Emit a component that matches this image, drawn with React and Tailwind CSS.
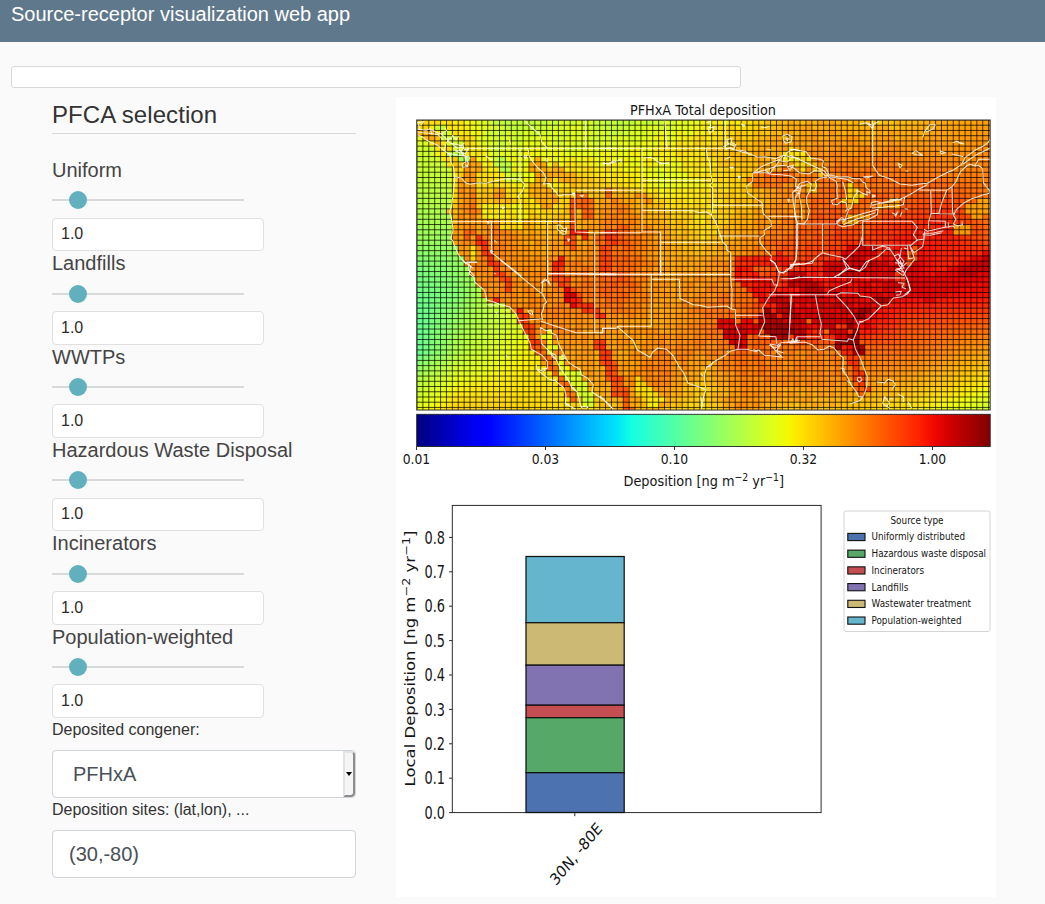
import React from "react";

const MAP = { x: 417, y: 120, w: 573, h: 290 };
const CELL_W = 5.893;
const CELL_H = 5.226;

// Colour scale: piecewise-linear channels over 0..1
const CHANNELS = {
  r: [[0, 0], [0.35, 0], [0.66, 1], [0.89, 1], [1, 0.5]],
  g: [[0, 0], [0.125, 0], [0.375, 1], [0.64, 1], [0.91, 0], [1, 0]],
  b: [[0, 0.5], [0.11, 1], [0.34, 1], [0.65, 0], [1, 0]],
};

function lerpTable(table, v) {
  if (v <= table[0][0]) return table[0][1];
  for (let i = 1; i < table.length; i++) {
    if (v <= table[i][0]) {
      const [a, av] = table[i - 1];
      const [b, bv] = table[i];
      return av + ((bv - av) * (v - a)) / (b - a);
    }
  }
  return table[table.length - 1][1];
}

function jet(t) {
  const c = (k) => Math.round(255 * lerpTable(CHANNELS[k], t));
  return `rgb(${c("r")},${c("g")},${c("b")})`;
}

// Deposition field (percent of the colour scale) every 41 x 29 px
const LAND = [
  [70, 66, 59, 58, 62, 57, 61, 64, 67, 71, 73, 70, 71, 73, 74, 75],
  [60, 70, 61, 65, 62, 64, 66, 68, 72, 74, 75, 76, 75, 75, 76, 76],
  [66, 68, 67, 64, 70, 66, 63, 66, 70, 76, 79, 79, 79, 78, 78, 76],
  [70, 70, 73, 66, 72, 77, 69, 67, 71, 76, 81, 80, 82, 85, 77, 75],
  [74, 74, 78, 73, 73, 80, 74, 68, 75, 79, 83, 84, 88, 88, 80, 81],
  [76, 76, 77, 76, 77, 81, 74, 74, 78, 85, 87, 90, 92, 87, 91, 92],
  [76, 76, 76, 76, 78, 81, 74, 76, 79, 89, 91, 91, 91, 90, 90, 89],
  [76, 76, 76, 77, 76, 75, 74, 78, 81, 90, 94, 91, 83, 82, 81, 78],
  [76, 76, 76, 76, 74, 74, 77, 76, 80, 77, 77, 79, 79, 76, 73, 68],
  [70, 70, 70, 72, 74, 75, 78, 70, 78, 76, 77, 75, 73, 70, 66, 60],
  [67, 67, 67, 67, 67, 72, 71, 67, 76, 70, 71, 69, 66, 63, 60, 57],
];
const SEA = [
  [68, 62, 58, 60, 62],
  [60, 62, 62, 62, 62],
  [58, 60, 60, 62, 62],
  [56, 58, 60, 62, 62],
  [54, 55, 60, 62, 62],
  [50, 53, 60, 63, 64],
  [48, 51, 61, 64, 65],
  [47, 54, 60, 64, 66],
  [47, 57, 63, 66, 67],
  [57, 64, 66, 67, 67],
  [63, 69, 69, 68, 67],
];
const COAST = [[120, 415], [160, 440], [166, 450], [178, 454], [212, 449], [240, 453], [262, 464], [280, 476], [301, 488], [305, 506], [318, 516], [345, 531], [365, 545], [385, 562], [410, 574]];

// Local features: x1, y1, x2, y2, radius, value
const FEATURES = [
  [440, 128, 460, 148, 5, 60], [422, 132, 438, 140, 4, 73], [452, 152, 466, 160, 4, 55],
  [474, 165, 469, 178, 7, 75], [466, 185, 468, 222, 9, 76], [472, 200, 474, 212, 5, 78],
  [501, 163, 503, 167, 6, 57], [508, 178, 520, 179, 5, 61], [500, 192, 502, 194, 6, 75],
  [487, 212, 520, 214, 8, 65], [505, 224, 520, 224, 5, 67], [538, 165, 545, 178, 8, 74],
  [536, 190, 548, 200, 9, 74], [555, 170, 572, 180, 6, 73], [473, 252, 474, 258, 4, 66],
  [467, 233, 469, 234, 5, 81], [478, 238, 492, 262, 4, 87], [492, 262, 510, 288, 4, 85],
  [497, 300, 498, 300, 3, 88], [521, 310, 522, 311, 3, 92], [524, 318, 536, 347, 5, 86],
  [540, 350, 556, 374, 4, 81], [562, 378, 571, 398, 4, 80], [548, 335, 551, 350, 5, 62],
  [560, 360, 568, 378, 5, 62], [576, 378, 590, 402, 6, 60], [582, 198, 590, 214, 7, 81],
  [573, 205, 572, 245, 5, 84], [577, 232, 584, 235, 4, 88], [563, 257, 555, 269, 4, 89],
  [556, 270, 576, 300, 6, 85], [566, 293, 576, 304, 4, 92], [576, 302, 603, 316, 4, 87],
  [602, 240, 616, 240, 8, 81], [611, 236, 604, 265, 6, 85], [622, 228, 626, 246, 5, 81],
  [609, 192, 610, 194, 3, 82], [615, 200, 616, 201, 2, 80], [641, 198, 646, 200, 4, 76],
  [616, 282, 634, 284, 4, 81], [600, 345, 606, 358, 6, 87], [608, 362, 620, 392, 7, 84],
  [624, 398, 630, 410, 4, 83], [640, 386, 654, 400, 8, 67], [652, 402, 655, 404, 5, 65],
  [740, 262, 780, 260, 7, 89], [745, 275, 770, 295, 11, 90], [728, 326, 740, 340, 9, 94],
  [745, 325, 752, 330, 7, 93], [768, 320, 782, 332, 10, 98], [780, 300, 800, 330, 8, 94],
  [795, 278, 815, 292, 8, 94], [830, 270, 870, 268, 8, 93], [850, 255, 868, 250, 7, 93],
  [815, 300, 845, 312, 6, 92], [830, 325, 850, 335, 8, 93], [844, 344, 858, 348, 7, 99],
  [850, 325, 853, 336, 5, 98], [858, 315, 868, 312, 3, 97], [882, 302, 888, 300, 3, 96],
  [850, 330, 832, 324, 2, 84], [824, 312, 826, 313, 2, 80], [808, 321, 810, 322, 2, 80],
  [849, 318, 850, 319, 2, 81], [828, 332, 830, 333, 2, 79], [847, 350, 862, 390, 7, 87],
  [858, 386, 863, 395, 4, 80], [846, 360, 848, 372, 3, 77], [757, 181, 785, 177, 8, 80],
  [792, 155, 803, 162, 8, 66], [812, 166, 820, 172, 4, 70], [803, 205, 802, 218, 4, 75],
  [810, 187, 814, 188, 4, 71], [850, 188, 856, 196, 6, 67], [848, 202, 849, 207, 4, 71],
  [845, 222, 865, 217, 4, 73], [880, 205, 900, 203, 3, 72], [975, 210, 990, 205, 8, 73],
  [960, 230, 968, 232, 5, 73], [930, 222, 952, 227, 4, 88], [900, 272, 902, 285, 4, 86],
  [910, 262, 915, 250, 5, 81], [930, 290, 990, 264, 12, 91], [962, 272, 990, 263, 6, 94],
];

function bilinear(grid, x, y) {
  const gx = Math.max(0, (x - MAP.x) / 41);
  const gy = Math.max(0, (y - MAP.y) / 29);
  const i = Math.min(Math.floor(gx), grid[0].length - 2);
  const j = Math.min(Math.floor(gy), grid.length - 2);
  const u = Math.min(1, gx - i);
  const v = Math.min(1, gy - j);
  const top = grid[j][i] * (1 - u) + grid[j][i + 1] * u;
  const bottom = grid[j + 1][i] * (1 - u) + grid[j + 1][i + 1] * u;
  return top * (1 - v) + bottom * v;
}

function segmentDistance(px, py, x1, y1, x2, y2) {
  const dx = x2 - x1;
  const dy = y2 - y1;
  const k = Math.max(0, Math.min(1, ((px - x1) * dx + (py - y1) * dy) / (dx * dx + dy * dy || 1)));
  return Math.hypot(px - x1 - k * dx, py - y1 - k * dy);
}

function buildCells() {
  const cells = [];
  for (let r = 0; r * CELL_H < MAP.h; r++) {
    for (let c = 0; c * CELL_W < MAP.w; c++) {
      const x = MAP.x + c * CELL_W;
      const y = MAP.y + r * CELL_H;
      const cx = x + CELL_W / 2;
      const cy = y + CELL_H / 2;
      const sea = cx < lerpTable(COAST, cy);
      let v = bilinear(sea ? SEA : LAND, cx, cy);
      for (const [x1, y1, x2, y2, rad, val] of FEATURES) {
        if (segmentDistance(cx, cy, x1, y1, x2, y2) < rad) v = v * 0.15 + val * 0.85;
      }
      const land = !sea && cx < 900 - Math.max(0, cy - 290) * 0.5;
      if (land) v += (((r * 37 + c * 59 + r * c * 7) % 13) - 6) * 0.22;
      cells.push({ x, y, fill: jet(v / 100) });
    }
  }
  return cells;
}

const CELLS = buildCells();
const V_LINES = Array.from({ length: 98 }, (_, i) => MAP.x + i * CELL_W);
const H_LINES = Array.from({ length: 56 }, (_, i) => MAP.y + i * CELL_H);

// Coastlines and borders, grouped in six tiles drawn at triple scale
const TILES = [
  { x: 396, y: 96, paths: [
    "M62 75 L72 96 L66 100 L90 103 L102 98 L118 107 L134 113 L150 128 L162 140 L178 152 L190 160 L202 176 L214 184",
    "M66 80 L84 76 L74 88 M64 108 L80 110 L102 112 L126 116 L140 130 M64 116 L80 123 L92 132 L102 138 L122 146 L140 160 L156 172 L188 178 L204 180",
    "M108 116 L104 102 M136 114 L152 104 L147 96 M152 126 L166 128 L170 118 L180 132 L188 120 M160 128 L150 142 L144 164 L148 152 M166 142 L186 146 L195 150 L206 140 M176 154 L204 154 L195 164 L178 164 L192 172 M200 146 L206 162 L217 158 L208 174 L196 168 L212 188 L217 202 L213 212 L200 214 L199 204 L210 197 L207 184 L218 180 L222 190 M206 206 L216 212",
    "M155 172 L162 176 L164 196 L172 212 L176 238 L175 262 L172 290 L167 330 L161 348 L168 376 L171 404 L164 428 L170 434 L178 456 L190 480 L204 498 L218 506 L218 522 L236 540",
    "M214 157 L660 157 M176 242 L196 246 L208 260 L222 265 L248 260 L270 262 L295 255 L330 248 L372 250 L372 157 M372 250 L386 265 L380 284 L365 302 L373 312 L372 376",
    "M396 157 L399 180 L414 202 L426 216 L442 230 L450 246 L442 265 L460 262 L468 276 L480 288 L488 300 L504 296 L526 296 L536 290 L538 408 L596 410 M166 377 L538 376 M540 283 L660 283 M596 410 L596 540 M596 410 L660 410 M455 376 L455 540 M455 533 L660 536 M286 376 L287 470 L376 540",
    "M385 72 L402 90 L416 102 L432 115 L437 138 L455 157 M569 72 L569 157 M217 508 L220 499 L244 499 M218 505 L232 518 M269 180 L287 192 M340 132 L345 146",
    "M384 181 L392 178 L389 188 Z M449 188 L456 188 L454 196 L450 194 Z M317 333 L326 334 L321 338 Z M273 376 L279 377 L276 384 Z M528 290 L536 293 L533 298 L528 294 M552 298 L563 297 L559 303 Z M295 433 L303 440 M283 464 L291 466 L286 472 Z M484 388 L493 387 L502 398 L512 395 L510 413 L500 415 L492 406 L484 400 Z M494 402 L510 408 M515 428 L521 430 L517 436 Z M620 201 L638 204 L660 197",
  ]},
  { x: 600, y: 96, paths: [
    "M0 157 L380 157 M194 72 L201 157 M8 201 L25 204 L40 195 L54 194 L62 189 L64 200 M132 186 L152 184 L166 190 L170 196 L184 202 L207 201 L176 204",
    "M126 157 L126 408 M126 253 L333 253 M0 283 L126 283 M0 410 L126 410 M126 407 L182 408 L182 540 M182 439 L362 439 M0 536 L392 536",
    "M319 157 L322 184 L330 200 L333 236 L338 258 L330 268 L338 276 L338 342 L334 357 L345 376 L352 390 L358 410 L368 438 L380 450 L380 462 L392 470 L392 540",
    "M126 343 L282 344 L296 350 L320 348 L336 358 M336 328 L486 328 L489 352 L512 374 L514 390 L492 404 L494 416 L480 425 L480 440 L498 464 L514 480 L512 492 L526 504 L536 526 L550 532 L560 520 L576 516 L588 492 L592 382",
    "M357 420 L478 420 M505 361 L592 361 M376 72 L376 157 L394 158 L426 168 L450 174 L474 184 L494 182 L526 188 L550 178 L600 190",
    "M458 232 L484 212 L508 202 L544 188 M458 232 L496 222 L530 210 L560 208 M462 230 L500 230 L512 235 L544 236 L572 240 L590 250 M494 222 L510 232 L534 200 L548 180 M552 188 L560 170 L580 160 L600 164 M540 194 L560 198 L572 190 M550 224 L570 222 L582 207 L562 212 L568 220 M458 232 L458 256 L440 270 L442 290 L462 304 L486 320 L488 330",
    "M592 382 L584 360 L584 336 L586 304 L600 284 M590 250 L586 270 L600 278 M578 286 L600 282 M588 290 L600 294",
    "M320 80 L333 74 L331 96 L342 92 L341 102 L330 112 L324 98 L334 88 M424 84 L434 88 L430 92 Z M482 92 L494 95 L508 91 M548 120 L562 115 L576 122 L573 138 L556 142 L550 132 Z M558 126 L566 128 L562 134 Z M370 152 L385 144 L380 132 L396 126 L394 140 L408 146 L400 160 L388 154 L376 162 M380 140 L404 150 M374 190 L390 184 L378 188 M390 214 L400 214 L396 218 Z M414 240 L421 242 L417 248 Z M418 162 L436 166 L448 176 M500 160 L513 162 M563 310 L568 310 L566 319 Z",
  ]},
  { x: 790, y: 96, paths: [
    "M0 160 L20 162 L48 167 L62 186 L90 190 L100 194 L97 212 L108 216 L118 238 L106 240 L92 226 L74 224 L56 234 L28 230 L12 216 L0 212 M0 178 L104 226 L116 242 L170 250 L190 260",
    "M118 236 L146 243 L174 242 L190 248 L210 248 L218 258 L226 262 L228 274 L240 284 L240 292 L230 286 L232 298 L218 292 L200 282 L202 290 L192 302 L188 318 L184 336 L176 340 L164 374 L158 378 M112 244 L90 246 L76 256 L80 270 L74 284 L60 282 L64 264 L52 256 L30 262 L18 280 L8 290 L10 322 L18 364 L22 382 L42 384 L52 370 L58 344 L50 320 L50 302 L60 284 M34 266 L28 300 L34 330 L36 372 M8 290 L26 274 L50 266 M116 244 L138 256 L142 270 L140 284 L144 306 L124 314 L128 324 L142 326 L154 316 L168 320 L172 340 L166 346 M158 258 L166 282 L170 312",
    "M138 384 L150 372 L166 370 L196 360 L222 352 L250 344 L264 340 L262 356 L236 370 L210 374 L190 386 L158 392 L144 386 L140 376 L156 364 L162 370 M160 386 L192 372 L256 350 M242 336 L244 320 L258 316 L276 322 L300 318 L330 310 L344 304 L340 326 L318 330 L278 334 L246 336 M246 328 L300 314 L324 308 M300 310 L336 312",
    "M248 72 L248 208 L268 238 L300 248 L330 264 L366 268 L388 264 L412 262 L440 246 L470 230 L490 222 L514 206 L526 184 L556 162 L580 150 L594 140 L601 128 M520 204 L536 192 L560 176 L601 156 M486 174 L520 182 M344 304 L366 292 L388 278 L412 266 M388 282 L470 283 L486 272 L498 256 L512 226 L530 210 L540 205 L556 210 L566 208 L578 218 L580 260 L592 276 L601 286 M601 190 L566 190 L556 208",
    "M422 284 L424 350 L416 376 L416 400 M470 284 L456 318 L446 354 M486 274 L488 350 L494 356 M424 352 L494 354 M418 374 L466 376 L466 396 M474 378 L476 396 M597 278 L598 292 L580 296 L564 302 L545 308 L520 322 L500 340 L490 358 L498 370 L490 384 L504 390 L517 386 L516 376 M402 400 L412 406 L464 394 L490 390 L494 396 M400 412 L428 412 L460 404 M398 416 L420 418 L456 410",
    "M218 376 L366 376 L382 394 L370 416 L382 432 L400 430 L404 406 M218 376 L218 448 L352 448 L364 446 M382 432 L360 450 L372 470 L398 452 L404 420 M20 384 L138 384 M20 384 L22 448 L18 490 L0 520 M98 384 L98 470 L118 476 L156 484 L166 490 L190 468 L208 450 L218 418 M98 470 L84 480 L66 496 L46 504 L0 508 M158 488 L170 516 L144 540 M172 516 L210 524 L228 498 L266 480 L290 458 L302 462 M248 450 L248 462 L278 450 L298 456 L312 478 L322 494 M352 448 L356 488 L370 486 M360 450 L374 490 L350 520 L340 540 M312 480 L326 474 L330 486 L320 494 L338 504 L330 520 L316 522 L338 538 M334 456 L330 482 L342 496 L332 514 M342 456 L354 460 M0 362 L34 362",
    "M208 85 L228 80 L240 90 L248 98 L252 84 L268 76 M230 80 L246 88 M398 124 L404 106 L420 86 L436 86 L430 98 L408 108 M488 140 L500 136 L522 144 L504 140 M366 172 L378 164 L398 178 L378 176 Z M450 164 L466 170 L454 174 Z M324 202 L336 208 L330 216 Z M346 224 L354 226 M220 242 L248 240 L230 246 Z M248 296 L256 300 L248 304 Z M306 350 L318 356 M314 360 L324 346 M336 348 L330 362 M322 350 L316 362 M344 338 L354 340",
  ]},
  { x: 396, y: 260, paths: [
    "M202 0 L208 10 L214 6 L242 7 M214 10 L224 20 L220 42 L234 52 L236 66 L266 92 L272 120 L294 126 L314 134 L340 140 L360 162 L372 190 L390 226 L402 248 L406 268 L438 286 L454 304 L454 324 L442 334 L424 328 L420 314 M424 330 L460 358 L476 362 L480 356 M478 362 L504 384 L510 406 L508 432 L540 448 M434 204 L436 250 L460 274 L480 298 L494 326 L518 362 L528 384 L544 396 L554 436 L560 448 M432 202 L450 212 L464 210 L468 220 L482 226 L488 252 L500 276 L516 306 L530 316 L552 328 L556 344 L574 354 L592 374 L588 396 L624 420 L652 448",
    "M313 0 L436 100 M455 0 L455 40 L660 42 M596 42 L596 218 M455 40 L455 58 L440 66 L438 100 L452 126 L444 134 L442 148 L436 162 L440 180 M368 182 L440 176 M434 184 L540 218 L620 218 L620 205 L660 205",
    "M274 134 L302 136 M298 156 L304 160 M328 150 L334 152 M328 168 L334 170 M330 286 L338 296 M294 40 L300 41 M396 152 L408 152 L410 164 L400 160 Z M466 278 L480 286 L480 296 L468 290 Z M498 284 L508 294 L498 298 Z M434 70 L448 56 M450 60 L464 76 M456 60 L462 72 M436 328 L454 324 M506 430 L522 436 M554 440 L576 440 L572 446 M514 356 L522 368 M530 382 L540 392",
  ]},
  { x: 600, y: 260, paths: [
    "M0 42 L392 43 M182 0 L182 42 M154 43 L154 58 L238 58 L240 116 L258 124 L280 134 L300 136 L322 142 L348 140 L380 138 L396 148 L406 148 M154 58 L154 199 L52 199 M52 199 L52 204 L8 205 L8 218 L0 218 M392 0 L392 56 L396 90 L395 146 M392 58 L516 58 L522 74 L534 76 M406 148 L407 196 L420 226 L414 268 M407 166 L488 166",
    "M52 200 L100 242 L112 270 L150 292 L158 276 L174 264 L200 268 L220 288 L236 318 L252 340 L264 370 L300 382 L318 390 L312 404 L304 448 M318 390 L314 360 L314 342 L320 322 L344 304 L376 286 L390 274 L414 268 L440 268 L464 274 L476 270 L494 286 L520 288 L548 292 L530 276 L510 252 L532 256 L544 248 L600 242",
    "M510 0 L524 8 L538 40 L534 66 L524 92 L504 116 L488 144 L494 186 L476 228 L528 230 L530 252 M508 104 L600 104 M574 104 L566 248 M536 40 L560 34 L576 14 L600 10 M544 56 L576 56 L600 50 M302 340 L310 350 M320 320 L332 318 L340 306 M380 276 L386 272 M460 268 L472 276 M508 256 L526 264 L542 254 L530 272 L550 278 M562 248 L584 246 L590 232 M0 408 L40 448 M302 410 L306 440",
  ]},
  { x: 790, y: 260, paths: [
    "M0 14 L66 10 L72 0 M0 56 L42 52 L345 54 M0 104 L112 104 M112 102 L118 92 L150 78 L182 66 L186 56 M132 52 L180 24 L160 0 M180 24 L208 34 L226 22 L238 0 M112 104 L140 104 L154 98 L204 100 L210 108 L242 112 L274 138 M138 106 L170 140 L190 166 L206 196 M76 104 L86 160 L94 192 L90 220 L96 238 L172 244 L176 236 L190 240 M0 190 L4 104 M20 230 L90 230 M20 230 L22 248",
    "M0 250 L44 246 L66 254 L84 270 L102 268 L118 258 L132 264 L148 284 L160 294 L158 332 L172 350 L184 376 L198 394 L206 410 L216 410 M190 240 L202 210 L208 188 L236 176 L256 156 L274 138 L294 134 L310 114 L336 110 L352 102 L360 92 L356 70 L350 54 L340 34 L326 14 L324 0 M190 240 L196 266 L212 298 L222 324 L232 350 L230 382 L222 404 L212 420 L204 424 M180 432 L204 424",
    "M314 8 L330 10 L342 24 L320 26 L340 36 M330 0 L338 20 L350 8 M324 68 L342 70 L336 82 L348 86 M316 96 L334 94 L330 104 L318 106 M350 52 L362 90 L344 104 M204 352 L212 352 L216 360 L208 366 L202 360 Z M260 366 L282 368 M282 370 L294 358 L308 362 L316 374 L306 388 M284 410 L298 428 L290 440 L278 430 Z M300 416 L310 416 M324 402 L340 410 L340 426 M354 426 L366 446 M386 446 L392 448 M292 440 L300 446 M152 324 L162 326 L162 338 M170 362 L182 370 M206 184 L220 186 M4 246 L8 236 L14 248 L22 240",
  ]},
];

const SLIDERS = ["Uniform", "Landfills", "WWTPs", "Hazardous Waste Disposal", "Incinerators", "Population-weighted"];
const JET_STOPS = Array.from({ length: 41 }, (_, i) => i / 40);

const BARS = [
  { label: "Population-weighted", y: 556.5, bottom: 622.7, fill: "#64b5cd" },
  { label: "Wastewater treatment", y: 622.7, bottom: 665.2, fill: "#ccb974" },
  { label: "Landfills", y: 665.2, bottom: 705.2, fill: "#8172b2" },
  { label: "Incinerators", y: 705.2, bottom: 717.7, fill: "#c44e52" },
  { label: "Hazardous waste disposal", y: 717.7, bottom: 772.7, fill: "#55a868" },
  { label: "Uniformly distributed", y: 772.7, bottom: 812.5, fill: "#4c72b0" },
];
const LEGEND = [
  ["Uniformly distributed", "#4c72b0", 93.5],
  ["Hazardous waste disposal", "#55a868", 114.5],
  ["Incinerators", "#c44e52", 52.5],
  ["Landfills", "#8172b2", 37],
  ["Wastewater treatment", "#ccb974", 99.5],
  ["Population-weighted", "#64b5cd", 90],
];
const COLOR_TICKS = [[416.5, "0.01"], [545.5, "0.03"], [674.5, "0.10"], [803.5, "0.32"], [932.5, "1.00"]];

// Text laid out at its natural proportions, then squeezed sideways to the given width
function AxisUnits({ name, ...props }) {
  return (
    <text lengthAdjust="spacingAndGlyphs" {...props}>
      {name} [ng m<tspan fontSize="10.5" dy="-5">−2</tspan><tspan dy="5"> yr</tspan><tspan fontSize="10.5" dy="-5">−1</tspan><tspan dy="5">]</tspan>
    </text>
  );
}

function DepositionMap() {
  return (
    <g>
      <text x="630" y="115" fontSize="14.6" textLength="146" lengthAdjust="spacingAndGlyphs">PFHxA Total deposition</text>
      <clipPath id="mapArea"><rect x={MAP.x} y={MAP.y} width={MAP.w} height={MAP.h} /></clipPath>
      <g clipPath="url(#mapArea)">
        <g shapeRendering="crispEdges">
          {CELLS.map((c, i) => <rect key={i} x={c.x} y={c.y} width={CELL_W + 0.3} height={CELL_H + 0.3} fill={c.fill} />)}
        </g>
        <g stroke="#000" strokeWidth="0.95" strokeOpacity="0.76">
          {V_LINES.map((x) => <line key={x} x1={x} x2={x} y1="120" y2="410" />)}
          {H_LINES.map((y) => <line key={y} x1="417" x2="990" y1={y} y2={y} />)}
        </g>
        <g fill="none" stroke="#fff" strokeWidth="3.2" strokeLinejoin="round" strokeOpacity="0.82">
          {TILES.map((t) => (
            <g key={`${t.x}-${t.y}`} transform={`translate(${t.x} ${t.y}) scale(0.33333)`}>
              {t.paths.map((d) => <path key={d} d={d} />)}
            </g>
          ))}
        </g>
      </g>
      <rect x="416.7" y="120" width="573.5" height="290" fill="none" stroke="#333" />
    </g>
  );
}

function ColorBar() {
  return (
    <g>
      <linearGradient id="scale">
        {JET_STOPS.map((s) => <stop key={s} offset={s} stopColor={jet(s)} />)}
      </linearGradient>
      <rect x="416.7" y="414.3" width="573.5" height="32.2" fill="url(#scale)" stroke="#222" strokeWidth="0.9" />
      {COLOR_TICKS.map(([x, label]) => (
        <g key={label}>
          <line x1={x} x2={x} y1="446.5" y2="450" stroke="#222" strokeWidth="0.9" />
          <text x={x - 13.8} y="464" fontSize="14.6" textLength="27.5" lengthAdjust="spacingAndGlyphs">{label}</text>
        </g>
      ))}
      <AxisUnits name="Deposition" x="623.5" y="485.5" fontSize="14.6" textLength="160.5" />
    </g>
  );
}

function StackedBars() {
  return (
    <g>
      <rect x="452.3" y="505.4" width="368.8" height="307.2" fill="#fff" stroke="#222" strokeWidth="0.95" />
      {[0, 1, 2, 3, 4, 5, 6, 7, 8].map((n) => {
        const y = 812.6 - n * 34.4;
        return (
          <g key={n}>
            <line x1="449" x2="452.3" y1={y} y2={y} stroke="#222" strokeWidth="0.95" />
            <text x="424.5" y={y + 6.2} fontSize="16.8" textLength="20.5" lengthAdjust="spacingAndGlyphs">{`0.${n}`}</text>
          </g>
        );
      })}
      {BARS.map((b) => <rect key={b.label} x="526" y={b.y} width="98.2" height={b.bottom - b.y} fill={b.fill} stroke="#111" strokeWidth="1.25" />)}
      <line x1="574.8" x2="574.8" y1="812.6" y2="816.2" stroke="#222" strokeWidth="0.95" />
      <AxisUnits name="Local Deposition" transform="translate(415.3 786.5) rotate(-90)" fontSize="13.5" textLength="256" />
      <text transform="translate(556 886.5) rotate(-50.5) skewX(-9)" fontSize="15" textLength="74" lengthAdjust="spacingAndGlyphs">30N, -80E</text>
    </g>
  );
}

function Legend() {
  return (
    <g>
      <rect x="844" y="511" width="146" height="120.5" rx="2" fill="#fff" stroke="#d4d4d4" />
      <text x="890.5" y="524" fontSize="10.9" textLength="53" lengthAdjust="spacingAndGlyphs">Source type</text>
      {LEGEND.map(([label, fill, width], i) => (
        <g key={label}>
          <rect x="847.8" y={533.4 + i * 16.72} width="17.2" height="7.2" fill={fill} stroke="#111" strokeWidth="1.1" />
          <text x="871.5" y={540.4 + i * 16.72} fontSize="10.9" textLength={width} lengthAdjust="spacingAndGlyphs">{label}</text>
        </g>
      ))}
    </g>
  );
}

function SliderGroup({ label }) {
  return (
    <div className="h-[93.33px]">
      <div className="h-6 text-xl leading-6 text-[#444]">{label}</div>
      <div className="flex h-[35.6px] w-48 items-center pt-[1.4px]">
        <div className="h-0.5 w-[17px] bg-[#d9d9d9]" />
        <div className="h-[18px] w-[18px] rounded-full bg-[#62b0bd]" />
        <div className="h-0.5 grow bg-[#d9d9d9]" />
      </div>
      <div className="flex h-[33.7px] w-[212px] items-center rounded border border-[#e0e0e0] bg-white px-2 text-base text-[#2b2b2b]">1.0</div>
    </div>
  );
}

export default function App() {
  return (
    <div className="h-[904px] w-[1045px] overflow-hidden bg-[#fafafa] font-['Liberation_Sans',Arial,sans-serif]">
      <header className="h-[42px] bg-[#60788b] px-[11px] text-xl leading-7 text-white">Source-receptor visualization web app</header>
      <div className="mt-6 ml-[11px] h-[22px] w-[730px] rounded-[3px] border border-[#d9d9d9] bg-white" />
      <main className="flex pt-[9px] pl-[52px]">
        <section className="w-[304px] shrink-0">
          <h1 className="h-[37px] border-b border-[#d9d9d9] text-2xl leading-9 tracking-[0.08px] text-[#333]">PFCA selection</h1>
          <div className="pt-6">
            {SLIDERS.map((label) => <SliderGroup key={label} label={label} />)}
          </div>
          <div className="text-base leading-6 text-[#333]">Deposited congener:</div>
          <div className="mt-2 flex h-12 justify-between overflow-hidden rounded border border-[#ced4da] bg-white pl-5 text-xl text-[#495057]">
            <span className="self-center">PFHxA</span>
            <span className="flex w-3 items-center justify-center rounded-r-sm border-2 border-t-[#e3e3e3] border-r-[#8c8c8c] border-b-[#8c8c8c] border-l-[#e3e3e3] bg-[#f5f5f5]">
              <svg className="h-1 w-1.5 shrink-0" viewBox="0 0 6 4"><path d="M0 0H6L3 4Z" fill="#000" /></svg>
            </span>
          </div>
          <div className="text-base leading-6 text-[#333]">Deposition sites: (lat,lon), ...</div>
          <div className="mt-2 flex h-12 items-center rounded border border-[#ced4da] bg-white px-4 text-xl text-[#495057]">(30,-80)</div>
        </section>
        <svg className="ml-10 h-[800px] w-[600px] shrink-0 bg-white font-['DejaVu_Sans',sans-serif]" viewBox="396 97 600 800" fill="#151515">
          <DepositionMap />
          <ColorBar />
          <StackedBars />
          <Legend />
        </svg>
      </main>
    </div>
  );
}
